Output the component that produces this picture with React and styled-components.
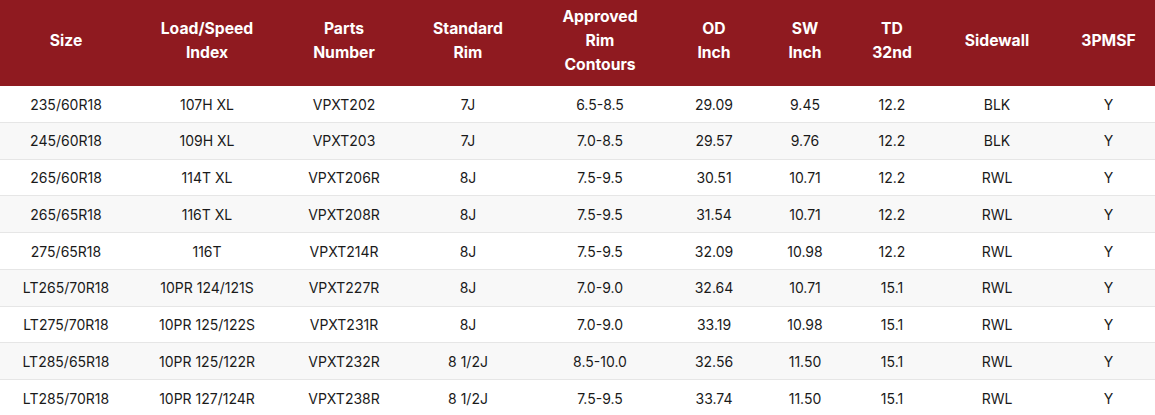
import React from "react";
import styled, { createGlobalStyle } from "styled-components";

const GlobalStyle = createGlobalStyle`
  body {
    margin: 0;
    background: #ffffff;
    font-family: Inter, "Liberation Sans", sans-serif;
  }
`;

const Table = styled.table`
  width: 1155px;
  border-collapse: collapse;
  table-layout: fixed;
  color: #1a1a1a;
`;

const HeadCell = styled.th`
  background: #8f1a20;
  color: #ffffff;
  font-size: 15.7px;
  font-weight: 700;
  line-height: 24px;
  padding: 5px 6px 9px;
  text-align: center;
  vertical-align: middle;
`;

const Row = styled.tr`
  background: ${(p) => (p.$striped ? "#f8f8f8" : "#ffffff")};
  border-bottom: 1px solid #e6e6e6;
`;

const Cell = styled.td`
  font-size: 14px;
  line-height: 15.75px;
  padding: 10.5px 6px 9.5px;
  text-align: center;
  white-space: nowrap;
`;

const columns = [
  { label: ["Size"], width: 132 },
  { label: ["Load/Speed", "Index"], width: 150 },
  { label: ["Parts", "Number"], width: 124 },
  { label: ["Standard", "Rim"], width: 124 },
  { label: ["Approved", "Rim", "Contours"], width: 140 },
  { label: ["OD", "Inch"], width: 88 },
  { label: ["SW", "Inch"], width: 94 },
  { label: ["TD", "32nd"], width: 80 },
  { label: ["Sidewall"], width: 130 },
  { label: ["3PMSF"], width: 93 },
];

const rows = [
  ["235/60R18", "107H XL", "VPXT202", "7J", "6.5-8.5", "29.09", "9.45", "12.2", "BLK", "Y"],
  ["245/60R18", "109H XL", "VPXT203", "7J", "7.0-8.5", "29.57", "9.76", "12.2", "BLK", "Y"],
  ["265/60R18", "114T XL", "VPXT206R", "8J", "7.5-9.5", "30.51", "10.71", "12.2", "RWL", "Y"],
  ["265/65R18", "116T XL", "VPXT208R", "8J", "7.5-9.5", "31.54", "10.71", "12.2", "RWL", "Y"],
  ["275/65R18", "116T", "VPXT214R", "8J", "7.5-9.5", "32.09", "10.98", "12.2", "RWL", "Y"],
  ["LT265/70R18", "10PR 124/121S", "VPXT227R", "8J", "7.0-9.0", "32.64", "10.71", "15.1", "RWL", "Y"],
  ["LT275/70R18", "10PR 125/122S", "VPXT231R", "8J", "7.0-9.0", "33.19", "10.98", "15.1", "RWL", "Y"],
  ["LT285/65R18", "10PR 125/122R", "VPXT232R", "8 1/2J", "8.5-10.0", "32.56", "11.50", "15.1", "RWL", "Y"],
  ["LT285/70R18", "10PR 127/124R", "VPXT238R", "8 1/2J", "7.5-9.5", "33.74", "11.50", "15.1", "RWL", "Y"],
];

export default function App() {
  return (
    <>
      <GlobalStyle />
      <Table>
        <colgroup>
          {columns.map((c, i) => (
            <col key={i} style={{ width: c.width }} />
          ))}
        </colgroup>
        <thead>
          <tr>
            {columns.map((c, i) => (
              <HeadCell key={i}>
                {c.label.map((l, j) => (
                  <React.Fragment key={j}>
                    {j > 0 && <br />}
                    {l}
                  </React.Fragment>
                ))}
              </HeadCell>
            ))}
          </tr>
        </thead>
        <tbody>
          {rows.map((r, i) => (
            <Row key={i} $striped={i % 2 === 1}>
              {r.map((v, j) => (
                <Cell key={j}>{v}</Cell>
              ))}
            </Row>
          ))}
        </tbody>
      </Table>
    </>
  );
}
